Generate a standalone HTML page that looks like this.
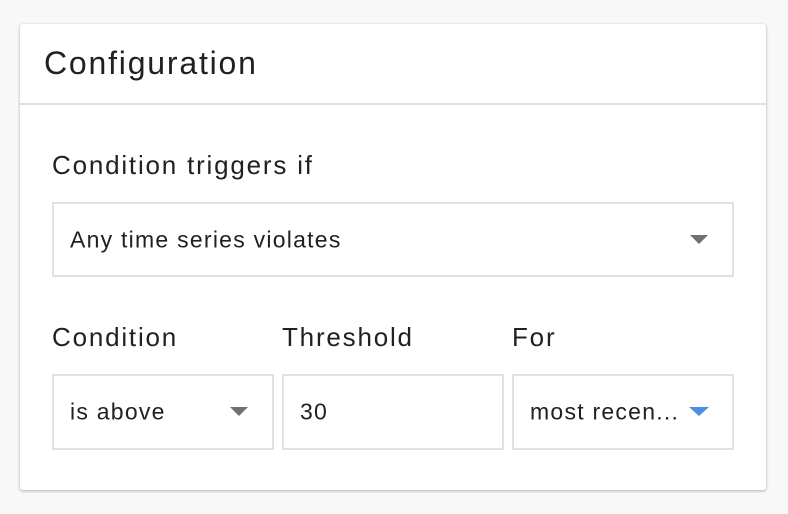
<!DOCTYPE html>
<html><head><style>
*{box-sizing:border-box;margin:0;padding:0}
body{width:788px;height:514px;background:#f8f8f8;font-family:"Liberation Sans",sans-serif;color:#212121;position:relative;overflow:hidden}
.card{position:absolute;left:20px;top:24px;width:746px;height:466px;background:#fff;border-radius:3px;box-shadow:0 1px 3px rgba(0,0,0,.3)}
.hd{position:absolute;left:0;top:0;width:746px;height:81px;border-bottom:2px solid #e0e0e0}
.t{position:absolute;white-space:nowrap;letter-spacing:1.8px}
.box{position:absolute;border:2px solid #e0e0e0;background:#fff}
.box span{position:absolute;left:16px;top:50%;transform:translateY(-50%);font-size:23px;letter-spacing:1.25px}
.tri{position:absolute;width:0;height:0;border-left:9px solid transparent;border-right:9px solid transparent;border-top:9px solid #707070}
</style></head><body>
<div class="card">
<div class="hd"><div class="t" style="left:24px;top:21px;font-size:32px">Configuration</div></div>
<div class="t" style="left:32px;top:126px;font-size:26px">Condition triggers if</div>
<div class="box" style="left:32px;top:178px;width:682px;height:75px"><span>Any time series violates</span><div class="tri" style="left:636px;top:31px"></div></div>
<div class="t" style="left:32px;top:298px;font-size:26px">Condition</div>
<div class="t" style="left:262px;top:298px;font-size:26px">Threshold</div>
<div class="t" style="left:492px;top:298px;font-size:26px">For</div>
<div class="box" style="left:32px;top:350px;width:222px;height:76px"><span>is above</span><div class="tri" style="left:176px;top:31px"></div></div>
<div class="box" style="left:262px;top:350px;width:222px;height:76px"><span>30</span></div>
<div class="box" style="left:492px;top:350px;width:222px;height:76px"><span>most recen...</span><div class="tri" style="left:175px;top:31px;border-left-width:10px;border-right-width:10px;border-top-color:#4a90e2"></div></div>
</div>
</body></html>
